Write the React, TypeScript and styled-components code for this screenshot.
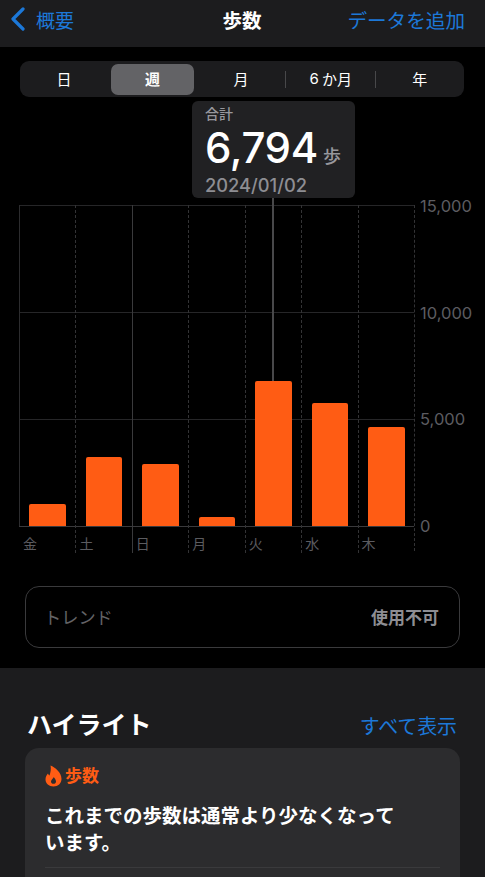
import React from "react";
import styled, { createGlobalStyle } from "styled-components";

const GlobalStyle = createGlobalStyle`
  html, body {
    margin: 0;
    padding: 0;
    background: #000;
  }
  body {
    font-family: "Inter", "Noto Sans CJK JP", sans-serif;
    -webkit-font-smoothing: antialiased;
  }
`;

const Page = styled.div`
  position: relative;
  width: 485px;
  height: 877px;
  overflow: hidden;
  background: #000;
  color: #fff;
`;

const NavBar = styled.header`
  height: 47px;
  background: #1c1c1e;
  display: grid;
  grid-template-columns: 1fr auto 1fr;
  align-items: center;
  padding: 0 20px 9px 10px;
  box-sizing: border-box;
`;
const BackLink = styled.a`
  display: flex;
  align-items: center;
  gap: 10px;
  color: #1c78d8;
  font-size: 19px;
`;
const NavTitle = styled.h1`
  margin: 0 0 0 9px;
  font-size: 19.5px;
  font-weight: 700;
`;
const AddLink = styled.a`
  justify-self: end;
  color: #1c78d8;
  font-size: 19.6px;
  white-space: nowrap;
`;

const Segments = styled.div`
  margin: 14px 21px 0 20px;
  height: 36px;
  padding: 2.5px 3px;
  box-sizing: border-box;
  border-radius: 9px;
  background: #1c1c1e;
  display: grid;
  grid-template-columns: 88px 83px 92px 89.5px 1fr;
`;
const Segment = styled.div<{ $active?: boolean; $divider?: boolean; $shift?: number }>`
  position: relative;
  display: flex;
  align-items: center;
  justify-content: center;
  padding-left: ${p => (p.$shift && p.$shift > 0 ? p.$shift : 0)}px;
  padding-right: ${p => (p.$shift && p.$shift < 0 ? -p.$shift : 0)}px;
  padding-bottom: 2px;
  font-size: 15px;
  border-radius: 7px;
  background: ${p => (p.$active ? "#636366" : "transparent")};
  font-weight: ${p => (p.$active ? 600 : 400)};
  &::after {
    content: "";
    display: ${p => (p.$divider ? "block" : "none")};
    position: absolute;
    right: 0;
    top: 7px;
    bottom: 7px;
    width: 1px;
    background: #48484a;
  }
`;
const SegmentDigit = styled.span`
  margin-right: 3px;
`;

const Tooltip = styled.div`
  position: absolute;
  left: 192px;
  top: 101px;
  width: 163px;
  height: 97px;
  box-sizing: border-box;
  padding: 3px 13px 0;
  border-radius: 6px;
  background: #212123;
  z-index: 2;
`;
const TooltipLabel = styled.div`
  font-size: 14px;
  line-height: 20px;
  font-weight: 500;
  color: #98989d;
`;
const TooltipValue = styled.div`
  display: flex;
  align-items: baseline;
  gap: 5px;
  height: 47px;
  line-height: 48px;
  font-size: 42px;
  font-weight: 500;
  letter-spacing: -0.35px;
`;
const TooltipUnit = styled.span`
  font-size: 18px;
  font-weight: 500;
  color: #98989d;
`;
const TooltipDate = styled.div`
  font-size: 18.3px;
  line-height: 28px;
  font-weight: 500;
  color: #8e8e93;
`;
const Cursor = styled.div`
  position: absolute;
  left: 272px;
  top: 197px;
  width: 2px;
  height: 184px;
  background: #48484a;
  z-index: 1;
`;

const Chart = styled.section`
  margin: 108px 0 0 19px;
  display: flex;
  height: 346px;
`;
const Plot = styled.div`
  position: relative;
  width: 396px;
  display: grid;
  grid-template-columns: repeat(7, 1fr);
  border-right: 1px dashed #333335;
  box-sizing: border-box;
`;
const GridLine = styled.div<{ $top: number; $strong?: boolean }>`
  position: absolute;
  left: 0;
  right: 0;
  top: ${p => p.$top}px;
  height: 1px;
  background: ${p => (p.$strong ? "#3a3a3c" : "#262628")};
`;
const Column = styled.div<{ $solid?: boolean; $edge?: boolean }>`
  position: relative;
  display: flex;
  flex-direction: column;
  border-left: 1px
    ${p => (p.$edge ? "solid transparent" : p.$solid ? "solid #3a3a3c" : "dashed #333335")};
`;
const BarSlot = styled.div<{ $edge?: boolean }>`
  height: 321px;
  display: flex;
  align-items: flex-end;
  justify-content: center;
  box-sizing: border-box;
  margin-left: ${p => (p.$edge ? "-1px" : "0")};
  border-left: ${p => (p.$edge ? "1px solid #2c2c2e" : "0")};
`;
const Bar = styled.div<{ $height: number }>`
  position: relative;
  z-index: 1;
  width: 36.5px;
  height: ${p => p.$height}px;
  background: #ff5c14;
  border-radius: 2px 2px 0 0;
`;
const DayLabel = styled.div`
  padding: 9px 0 0 3px;
  font-size: 14px;
  line-height: 18px;
  color: #5c5c60;
`;
const Ticks = styled.div`
  width: 62px;
  height: 322px;
  display: flex;
  flex-direction: column;
  justify-content: space-between;
  padding: 1px 0 0 5px;
  box-sizing: border-box;
`;
const Tick = styled.div`
  height: 1px;
  line-height: 1px;
  font-size: 16.5px;
  color: #5c5c60;
  white-space: nowrap;
`;

const TrendCard = styled.div`
  margin: 35px 25px 0;
  height: 62px;
  box-sizing: border-box;
  padding: 0 20px 2px 18px;
  display: flex;
  align-items: center;
  justify-content: space-between;
  border: 1px solid #3a3a3c;
  border-radius: 14px;
`;
const TrendLabel = styled.span`
  font-size: 17.2px;
  color: #636366;
`;
const TrendValue = styled.span`
  font-size: 17px;
  font-weight: 700;
  color: #8e8e93;
`;

const Highlights = styled.section`
  margin-top: 20px;
  height: 300px;
  padding: 36px 25px 0;
  box-sizing: border-box;
  background: #1c1c1e;
`;
const HighlightsHead = styled.div`
  display: flex;
  align-items: baseline;
  justify-content: space-between;
  padding: 2px 3px 0 2px;
  height: 44px;
  box-sizing: border-box;
`;
const HighlightsTitle = styled.h2`
  margin: 0;
  font-size: 25px;
  line-height: 38px;
  font-weight: 700;
`;
const ShowAll = styled.a`
  color: #1c78d8;
  font-size: 19.9px;
  line-height: 36px;
`;
const Card = styled.div`
  background: #2c2c2e;
  border-radius: 14px;
  padding: 15px 20px 0;
  height: 200px;
  box-sizing: border-box;
`;
const CardTag = styled.div`
  display: flex;
  align-items: center;
  gap: 3px;
  color: #ff5c14;
  font-size: 17px;
  font-weight: 700;
  line-height: 26px;
`;
const CardText = styled.p`
  margin: 14px 0 0;
  font-size: 19.5px;
  line-height: 27px;
  font-weight: 700;
`;
const CardRule = styled.hr`
  margin: 10px 0 0;
  border: 0;
  height: 1px;
  background: #3a3a3c;
`;

const days = [
  { label: "金", height: 22 },
  { label: "土", height: 69 },
  { label: "日", height: 62 },
  { label: "月", height: 9 },
  { label: "火", height: 145 },
  { label: "水", height: 123 },
  { label: "木", height: 99 }
];

const ticks = ["15,000", "10,000", "5,000", "0"];

function App() {
  return (
    <Page>
      <GlobalStyle />
      <NavBar>
        <BackLink>
          <svg width="16" height="24" viewBox="0 0 16 24" fill="none">
            <path
              d="M13 2 L3 12 L13 22"
              stroke="#1c78d8"
              strokeWidth="3.2"
              strokeLinecap="round"
              strokeLinejoin="round"
            />
          </svg>
          概要
        </BackLink>
        <NavTitle>歩数</NavTitle>
        <AddLink>データを追加</AddLink>
      </NavBar>

      <Segments>
        <Segment $shift={-6}>日</Segment>
        <Segment $active>週</Segment>
        <Segment $divider $shift={2}>
          月
        </Segment>
        <Segment $divider>
          <SegmentDigit>6</SegmentDigit>か月
        </Segment>
        <Segment $shift={3}>年</Segment>
      </Segments>

      <Tooltip>
        <TooltipLabel>合計</TooltipLabel>
        <TooltipValue>
          6,794 <TooltipUnit>歩</TooltipUnit>
        </TooltipValue>
        <TooltipDate>2024/01/02</TooltipDate>
      </Tooltip>
      <Cursor />

      <Chart>
        <Plot>
          <GridLine $top={0} />
          <GridLine $top={107} />
          <GridLine $top={214} />
          <GridLine $top={321} $strong />
          {days.map((day, i) => (
            <Column key={day.label} $solid={i === 2} $edge={i === 0}>
              <BarSlot $edge={i === 0}>
                <Bar $height={day.height} />
              </BarSlot>
              <DayLabel>{day.label}</DayLabel>
            </Column>
          ))}
        </Plot>
        <Ticks>
          {ticks.map(t => (
            <Tick key={t}>{t}</Tick>
          ))}
        </Ticks>
      </Chart>

      <TrendCard>
        <TrendLabel>トレンド</TrendLabel>
        <TrendValue>使用不可</TrendValue>
      </TrendCard>

      <Highlights>
        <HighlightsHead>
          <HighlightsTitle>ハイライト</HighlightsTitle>
          <ShowAll>すべて表示</ShowAll>
        </HighlightsHead>
        <Card>
          <CardTag>
            <svg width="17" height="22" viewBox="0 0 17 22">
              <path
                fillRule="evenodd"
                d="M5.5 0.5 C10 2.5 16.5 7 16.5 14 C16.5 18.5 13 21.5 8.5 21.5 C4 21.5 0.5 18.5 0.5 14.5 C0.5 12 1.5 10 3 8.5 C3.3 9.5 3.8 10.2 4.5 10.5 C5.5 7.5 6.3 4 5.5 0.5 Z M8.8 12 C8.6 13.5 6 14.5 6 16.5 C6 18 7.1 18.8 8.5 18.8 C9.9 18.8 11 18 11 16.5 C11 14.5 9.5 13.5 8.8 12 Z"
                fill="#ff5c14"
              />
            </svg>
            歩数
          </CardTag>
          <CardText>
            これまでの歩数は通常より少なくなって
            <br />
            います。
          </CardText>
          <CardRule />
        </Card>
      </Highlights>
    </Page>
  );
}

export default App;
